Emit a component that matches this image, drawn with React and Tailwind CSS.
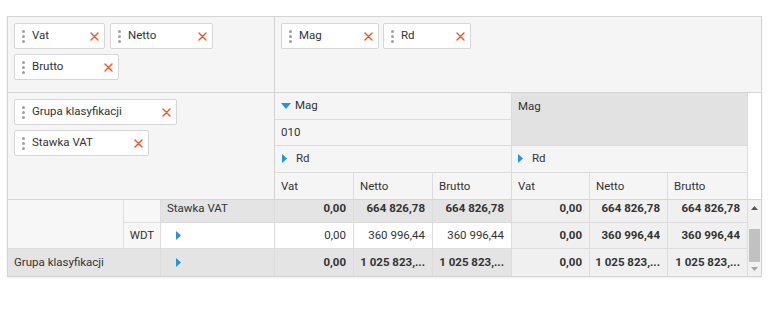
import React from 'react';

const Dots = () => (
  <div className="flex flex-col gap-[2px] mr-[7px]">
    <span className="block w-[3px] h-[3px] rounded-full bg-[#a0a0a0]" />
    <span className="block w-[3px] h-[3px] rounded-full bg-[#a0a0a0]" />
    <span className="block w-[3px] h-[3px] rounded-full bg-[#a0a0a0]" />
  </div>
);

const Close = () => (
  <svg width="9" height="9" viewBox="0 0 9 9" className="shrink-0">
    <path d="M1 1L8 8M8 1L1 8" stroke="#f4511e" strokeWidth="1.4" strokeLinecap="round" />
  </svg>
);

const Chip = ({ label, width }) => (
  <div className={`flex h-[26px] items-center justify-between rounded-[2px] border border-[#d6d6d6] bg-white pl-[7px] pr-[5px] ${width}`}>
    <div className="flex items-center">
      <Dots />
      <span>{label}</span>
    </div>
    <Close />
  </div>
);

const Down = () => (
  <svg width="10" height="6" viewBox="0 0 10 6" className="mr-[4px]">
    <path d="M0 0H10L5 6Z" fill="#1e96dc" />
  </svg>
);

const Right = ({ className = '' }) => (
  <svg width="5" height="9" viewBox="0 0 5 9" className={className}>
    <path d="M0 0L5 4.5L0 9Z" fill="#1e96dc" />
  </svg>
);

const Val = ({ children, bold, bg, last }) => (
  <div className={`flex items-center justify-end pr-[7px] ${bold ? 'font-bold' : ''} ${bg} ${last ? '' : 'border-r border-[#dcdcdc]'}`}>
    {children}
  </div>
);

export default function App() {
  return (
    <div className="bg-white w-[768px] h-[329px] pt-[16px] pl-[7px] text-[11.5px] text-[#333]" style={{ fontFamily: 'Roboto, "Liberation Sans", sans-serif' }}>
      <div className="w-[755px] border border-[#d4d4d4] shadow-[0_1px_2px_rgba(0,0,0,0.08)]">
        {/* Filter / column fields */}
        <div className="flex h-[76px] border-b border-[#d4d4d4] bg-[#f5f5f5]">
          <div className="w-[267px] border-r border-[#d4d4d4] pt-[6px] pl-[6px] flex flex-wrap content-start gap-[5px]">
            <Chip label="Vat" width="w-[91px]" />
            <Chip label="Netto" width="w-[103px]" />
            <Chip label="Brutto" width="w-[105px]" />
          </div>
          <div className="flex-1 pt-[6px] pl-[6px] flex content-start items-start gap-[4px]">
            <Chip label="Mag" width="w-[98px]" />
            <Chip label="Rd" width="w-[88px]" />
          </div>
        </div>

        {/* Row fields + column header */}
        <div className="flex h-[107px] border-b border-[#d4d4d4]">
          <div className="w-[267px] border-r border-[#d4d4d4] bg-[#f5f5f5] pt-[6px] pl-[6px] flex flex-col gap-[5px]">
            <Chip label="Grupa klasyfikacji" width="w-[163px]" />
            <Chip label="Stawka VAT" width="w-[135px]" />
          </div>
          <div className="w-[237px] flex flex-col border-r border-[#dcdcdc] bg-[#f5f5f5]">
            <div className="h-[27px] flex items-center pl-[6px] border-b border-[#dcdcdc]">
              <Down />
              <span>Mag</span>
            </div>
            <div className="h-[26px] flex items-center pl-[6px] border-b border-[#dcdcdc]">010</div>
            <div className="h-[28px] flex items-center pl-[7px] border-b border-[#dcdcdc]">
              <Right className="mr-[9px]" />
              <span>Rd</span>
            </div>
            <div className="h-[26px] grid grid-cols-[79px_79px_79px]">
              <div className="flex items-center pl-[6px] border-r border-[#dcdcdc]">Vat</div>
              <div className="flex items-center pl-[6px] border-r border-[#dcdcdc]">Netto</div>
              <div className="flex items-center pl-[6px]">Brutto</div>
            </div>
          </div>
          <div className="w-[236px] flex flex-col border-r border-[#dcdcdc] bg-[#f5f5f5]">
            <div className="h-[53px] bg-[#e2e2e2] border-b border-[#dcdcdc] pl-[6px] pt-[5px]">Mag</div>
            <div className="h-[28px] flex items-center pl-[6px] border-b border-[#dcdcdc]">
              <Right className="mr-[9px]" />
              <span>Rd</span>
            </div>
            <div className="h-[26px] grid grid-cols-[78px_78px_78px]">
              <div className="flex items-center pl-[6px] border-r border-[#dcdcdc]">Vat</div>
              <div className="flex items-center pl-[6px] border-r border-[#dcdcdc]">Netto</div>
              <div className="flex items-center pl-[6px]">Brutto</div>
            </div>
          </div>
          <div className="flex-1 bg-white" />
        </div>

        {/* Body */}
        <div className="flex">
          <div className="w-[740px] grid grid-cols-[116px_37px_114px_79px_79px_79px_78px_78px_80px] grid-rows-[23px_26px_27px]">
            <div className="row-span-2 bg-[#f7f7f7] border-r border-b border-[#dcdcdc]" />
            <div className="bg-[#f7f7f7] border-r border-b border-[#dcdcdc]" />
            <div className="bg-[#e4e4e4] border-r border-b border-[#dcdcdc] pl-[6px] pb-[4px] flex items-center">Stawka VAT</div>
            <Val bold bg="bg-[#e4e4e4] border-b pb-[4px]">0,00</Val>
            <Val bold bg="bg-[#e4e4e4] border-b pb-[4px]">664 826,78</Val>
            <Val bold bg="bg-[#e4e4e4] border-b pb-[4px]">664 826,78</Val>
            <Val bold bg="bg-[#f0f0f0] border-b pb-[4px]">0,00</Val>
            <Val bold bg="bg-[#f0f0f0] border-b pb-[4px]">664 826,78</Val>
            <Val bold bg="bg-[#f0f0f0] border-b pb-[4px] border-r border-[#dcdcdc]">664 826,78</Val>

            <div className="bg-[#f7f7f7] border-r border-b border-[#dcdcdc] flex items-center justify-center">WDT</div>
            <div className="bg-white border-r border-b border-[#dcdcdc] pl-[15px] flex items-center">
              <Right />
            </div>
            <Val bg="bg-white border-b">0,00</Val>
            <Val bg="bg-white border-b">360 996,44</Val>
            <Val bg="bg-white border-b">360 996,44</Val>
            <Val bold bg="bg-[#f0f0f0] border-b">0,00</Val>
            <Val bold bg="bg-[#f0f0f0] border-b">360 996,44</Val>
            <Val bold bg="bg-[#f0f0f0] border-b border-r border-[#dcdcdc]">360 996,44</Val>

            <div className="col-span-2 bg-[#e4e4e4] border-r border-[#dcdcdc] pl-[6px] flex items-center">Grupa klasyfikacji</div>
            <div className="bg-[#e4e4e4] border-r border-[#dcdcdc] pl-[15px] flex items-center">
              <Right />
            </div>
            <Val bold bg="bg-[#e4e4e4]">0,00</Val>
            <Val bold bg="bg-[#e4e4e4]">1 025 823,...</Val>
            <Val bold bg="bg-[#e4e4e4]">1 025 823,...</Val>
            <Val bold bg="bg-[#f0f0f0]">0,00</Val>
            <Val bold bg="bg-[#f0f0f0]">1 025 823,...</Val>
            <Val bold bg="bg-[#f0f0f0] border-r border-[#dcdcdc]">1 025 823,...</Val>
          </div>
          {/* Scrollbar */}
          <div className="flex-1 bg-[#f1f1f1] flex flex-col items-center">
            <div className="h-[16px] flex items-center justify-center">
              <svg width="7" height="4" viewBox="0 0 7 4"><path d="M0 4L3.5 0L7 4Z" fill="#555" /></svg>
            </div>
            <div className="mt-[13px] w-[11px] h-[33px] bg-[#c1c1c1]" />
            <div className="flex-1 flex items-center justify-center">
              <svg width="7" height="4" viewBox="0 0 7 4"><path d="M0 0L3.5 4L7 0Z" fill="#a3a3a3" /></svg>
            </div>
          </div>
        </div>
      </div>
    </div>
  );
}
